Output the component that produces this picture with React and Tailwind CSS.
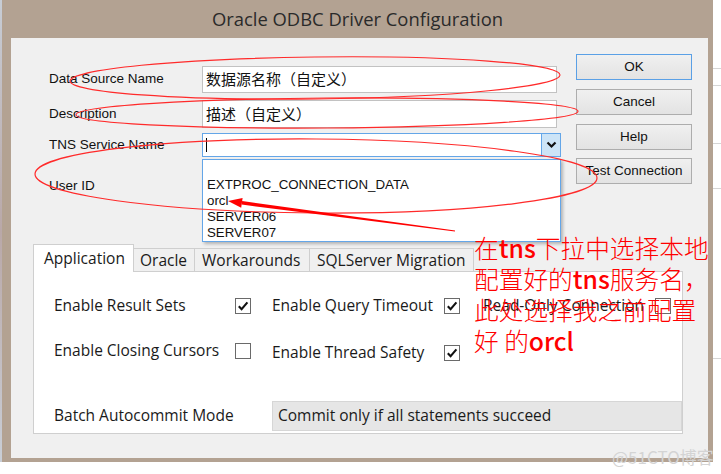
const sys = "font-['Liberation_Sans',Arial,sans-serif] text-[13.5px] text-[#111]";
const seg = "font-['Open_Sans',sans-serif] text-[15.5px] text-[#1a1a1a]";

function Check({ on }) {
  return (
    <div className="w-[16px] h-[16px] border border-[#6a6a6a] bg-white flex items-center justify-center shrink-0">
      {on && (
        <svg width="12" height="12" viewBox="0 0 12 12">
          <path d="M1.8 6.2 L4.6 9.2 L10.4 2.4" fill="none" stroke="#111" strokeWidth="2.1" />
        </svg>
      )}
    </div>
  );
}

function Btn({ children, primary }) {
  return (
    <div
      className={
        primary
          ? "h-[26px] w-[116px] border border-[#5aa0e6] bg-gradient-to-b from-[#f0f0f0] to-[#e3e3e3] flex items-center justify-center"
          : "h-[26px] w-[116px] border border-[#adadad] bg-gradient-to-b from-[#f0f0f0] to-[#e3e3e3] flex items-center justify-center"
      }
    >
      <span className={sys}>{children}</span>
    </div>
  );
}

function Row({ label, children, className }) {
  return (
    <div className={"flex items-center " + className}>
      <div className={"w-[153px] " + sys}>{label}</div>
      {children}
    </div>
  );
}

export default function App() {
  return (
    <div className="w-[721px] h-[474px] bg-white relative overflow-hidden flex">
      <div className="w-[2px] h-[462px] bg-gradient-to-b from-[#c7cdd6] via-[#b9a8a8] to-[#c9ced6]" />
      <div className="w-[711px] h-[462px] bg-[#b3a292] flex flex-col">
        <div className="h-[38px] flex items-center justify-center font-['Open_Sans',sans-serif] text-[18.4px] text-[#2a2a2a]">
          Oracle ODBC Driver Configuration
        </div>
        <div className="ml-[9px] mr-[5px] mb-[4px] flex-1 bg-[#f0f0f0] relative">
          <div className="flex pt-[16px]">
            <div className="w-[565px] pl-[38px] pt-[12px]">
              <Row label="Data Source Name" className="h-[27px]">
                <div className="w-[355px] h-[27px] border border-[#c2c2c2] bg-white flex items-center pl-[3px] font-['Noto_Sans_CJK_SC',sans-serif] text-[15px] text-[#111]">
                  数据源名称（自定义）
                </div>
              </Row>
              <Row label="Description" className="h-[28px] mt-[7px]">
                <div className="w-[355px] h-[28px] border border-[#c2c2c2] bg-white flex items-center pl-[3px] font-['Noto_Sans_CJK_SC',sans-serif] text-[15px] text-[#111]">
                  描述（自定义）
                </div>
              </Row>
              <Row label="TNS Service Name" className="h-[24px] mt-[5px]">
                <div className="w-[359px] h-[24px] border border-[#64a6e8] bg-white flex">
                  <div className="flex-1 flex items-center pl-[3px]">
                    <div className="w-[1px] h-[14px] bg-black" />
                  </div>
                  <div className="w-[19px] h-full bg-[#cce4f7] border-l border-[#64a6e8] flex items-center justify-center">
                    <svg width="11" height="8" viewBox="0 0 11 8">
                      <path d="M1.5 1.5 L5.5 5.5 L9.5 1.5" fill="none" stroke="#111" strokeWidth="2.2" />
                    </svg>
                  </div>
                </div>
              </Row>
              <Row label="User ID" className="h-[24px] mt-[17px]">
                <div className="w-[355px] h-[24px] border border-[#c2c2c2] bg-white" />
              </Row>
            </div>
            <div className="flex flex-col gap-[9px]">
              <Btn primary>OK</Btn>
              <Btn>Cancel</Btn>
              <Btn>Help</Btn>
              <div className="-mt-[1px]">
                <Btn>Test Connection</Btn>
              </div>
            </div>
          </div>

          <div className="ml-[22px] mt-[45px] w-[650px]">
            <div className="flex items-end h-[28px]">
              <div className={"w-[101px] h-[28px] bg-white border border-b-0 border-[#cfcfcf] -mb-px relative z-10 pl-[10px] pt-[2px] " + seg}>
                Application
              </div>
              <div className={"w-[61px] h-[23px] bg-[#f0f0f0] border-t border-r border-[#cfcfcf] pl-[6px] " + seg}>Oracle</div>
              <div className={"w-[115px] h-[23px] bg-[#f0f0f0] border-t border-r border-[#cfcfcf] pl-[7px] " + seg}>Workarounds</div>
              <div className={"w-[164px] h-[23px] bg-[#f0f0f0] border-t border-r border-[#cfcfcf] pl-[7px] " + seg}>SQLServer Migration</div>
            </div>
            <div className="h-[163px] bg-white border border-[#cfcfcf] pl-[20px] pt-[24px]">
              <div className="flex items-center h-[20px]">
                <div className={"w-[181px] " + seg}>Enable Result Sets</div>
                <Check on />
                <div className={"w-[172px] ml-[21px] " + seg}>Enable Query Timeout</div>
                <Check on />
                <div className={"w-[172px] ml-[23px] " + seg}>Read-Only Connection</div>
                <Check />
              </div>
              <div className="flex items-center h-[20px] mt-[25px]">
                <div className={"w-[181px] " + seg}>Enable Closing Cursors</div>
                <Check />
                <div className={"w-[172px] ml-[21px] mt-[3px] " + seg}>Enable Thread Safety</div>
                <div className="mt-[3px]">
                  <Check on />
                </div>
              </div>
              <div className="flex items-center h-[30px] mt-[40px]">
                <div className={"w-[218px] " + seg}>Batch Autocommit Mode</div>
                <div className={"w-[410px] h-[30px] bg-[#e6e6e6] border border-[#d6d6d6] flex items-center pl-[5px] " + seg}>
                  Commit only if all statements succeed
                </div>
              </div>
            </div>
          </div>

          <div className="absolute left-[191px] top-[121px] w-[359px] h-[83px] bg-white border border-[#64a6e8] shadow-[2px_2px_3px_rgba(0,0,0,0.25)] pl-[4px] pt-[17px] font-['Liberation_Sans',Arial,sans-serif] text-[13.3px] leading-[16px] text-[#111]">
            <div>EXTPROC_CONNECTION_DATA</div>
            <div>orcl</div>
            <div>SERVER06</div>
            <div>SERVER07</div>
          </div>
        </div>
      </div>
      <div className="flex-1 relative">
        <div className="absolute left-0 right-0 top-[68px] h-px bg-[#d6d6d6]" />
        <div className="absolute left-0 right-0 top-[85px] h-px bg-[#d6d6d6]" />
        <div className="absolute left-0 right-0 top-[143px] h-px bg-[#d6d6d6]" />
        <div className="absolute left-0 right-0 top-[188px] h-px bg-[#d6d6d6]" />
        <div className="absolute left-0 right-0 top-[358px] h-px bg-[#d6d6d6]" />
      </div>

      <svg className="absolute left-0 top-0 pointer-events-none" width="721" height="474" viewBox="0 0 721 474">
        <g fill="none" stroke="#ff2a2a" strokeWidth="1.2">
          <ellipse cx="315" cy="78" rx="245" ry="21" transform="rotate(-0.7 315 78)" />
          <ellipse cx="327" cy="113" rx="251" ry="15" transform="rotate(-0.4 327 113)" />
          <ellipse cx="316" cy="176" rx="281" ry="37" transform="rotate(0.4 316 176)" />
        </g>
        <polygon points="242.1,201 455.05,230.6 454.95,231.4 241.7,204.6" fill="#ff0000" />
        <polygon points="228,201 242.6,197.9 241.2,207.8" fill="#ff0000" />
      </svg>

      <div className="absolute left-[474px] top-[232px] whitespace-nowrap font-['Noto_Sans_CJK_SC',sans-serif] font-light text-[24.7px] leading-[31px] text-[#ff0000]">
        在<span className="font-medium">tns</span>下拉中选择本地
        <br />
        配置好的<span className="font-medium">tns</span>服务名，
        <br />
        此处选择我之前配置
        <br />
        好 的<span className="font-medium">orcl</span>
      </div>

      <div className="absolute left-[612px] top-[444px] font-['Noto_Sans_CJK_SC',sans-serif] text-[17px] text-[#d4d4d4]">
        @51CTO博客
      </div>
    </div>
  );
}
